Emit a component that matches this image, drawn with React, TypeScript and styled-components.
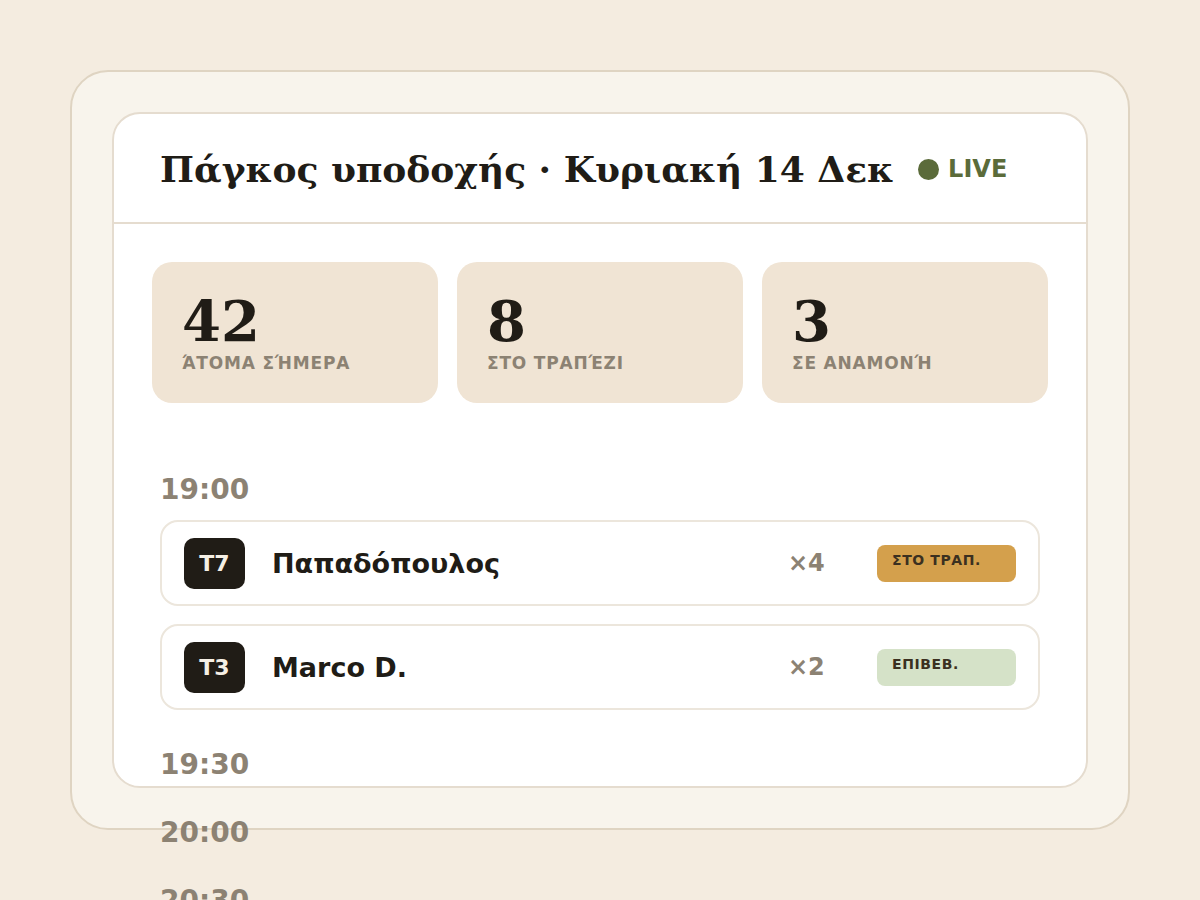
import React from "react";
import styled, { createGlobalStyle } from "styled-components";

const GlobalStyle = createGlobalStyle`
  html, body {
    margin: 0;
    padding: 0;
    background: #f4ece0;
  }
  body {
    font-family: "DejaVu Sans", "Noto Sans", sans-serif;
    color: #201c16;
  }
`;

const Page = styled.div`
  padding: 70px;
`;

const Frame = styled.div`
  height: 760px;
  box-sizing: border-box;
  padding: 40px;
  background: #f8f4ec;
  border: 2px solid #dfd4c2;
  border-radius: 38px;
`;

const Card = styled.div`
  height: 676px;
  box-sizing: border-box;
  background: #ffffff;
  border: 2px solid #e5dccf;
  border-radius: 28px;
`;

const Header = styled.header`
  height: 110px;
  box-sizing: border-box;
  padding: 2px 46px 0;
  display: flex;
  align-items: center;
  gap: 24px;
  border-bottom: 2px solid #e5dccf;
`;

const Title = styled.h1`
  margin: 0;
  font-family: "DejaVu Serif", "Liberation Serif", serif;
  font-size: 36px;
  font-weight: 700;
  color: #201c16;
`;

const Live = styled.div`
  display: flex;
  align-items: center;
  gap: 9px;
  color: #5b6b3a;
  font-size: 24px;
  font-weight: 700;
`;

const Dot = styled.span`
  width: 21px;
  height: 21px;
  border-radius: 50%;
  background: #5b6b3a;
`;

const Stats = styled.div`
  padding: 38px 38px 0;
  display: grid;
  grid-template-columns: repeat(3, 1fr);
  gap: 19px;
`;

const StatCard = styled.div`
  height: 141px;
  box-sizing: border-box;
  padding: 31px 30px 0;
  background: #f0e4d4;
  border-radius: 20px;
`;

const StatValue = styled.div`
  font-family: "DejaVu Serif", "Liberation Serif", serif;
  font-size: 56px;
  font-weight: 700;
  line-height: 1;
  color: #201c16;
`;

const StatLabel = styled.div`
  margin-top: 4px;
  font-size: 17px;
  font-weight: 700;
  letter-spacing: 0.8px;
  text-transform: uppercase;
  color: #8c8273;
`;

const Schedule = styled.div`
  padding: 70px 46px 0;
  display: flex;
  flex-direction: column;
  gap: 38px;
`;

const Slot = styled.section`
  display: flex;
  flex-direction: column;
  gap: 17px;
`;

const SlotTime = styled.div`
  height: 30px;
  font-size: 28px;
  font-weight: 700;
  line-height: 33px;
  color: #8c8273;
`;

const Rows = styled.div`
  display: flex;
  flex-direction: column;
  gap: 18px;
`;

const Row = styled.div`
  height: 86px;
  box-sizing: border-box;
  padding: 0 22px;
  display: grid;
  grid-template-columns: 61px 1fr 89px 139px;
  align-items: center;
  border: 2px solid #ece6dc;
  border-radius: 18px;
`;

const TableTag = styled.div`
  height: 51px;
  border-radius: 10px;
  background: #201c16;
  color: #f5efe5;
  font-size: 22px;
  font-weight: 700;
  display: flex;
  align-items: center;
  justify-content: center;
`;

const Guest = styled.div`
  margin-left: 27px;
  font-size: 27px;
  font-weight: 700;
  color: #201c16;
`;

const Party = styled.div`
  font-size: 24px;
  font-weight: 700;
  color: #8c8273;
`;

const Status = styled.div<{ $tone: "seated" | "confirmed" }>`
  height: 37px;
  box-sizing: border-box;
  padding: 7px 15px 0;
  border-radius: 8px;
  background: ${(p) => (p.$tone === "seated" ? "#d4a04c" : "#d5e2c8")};
  color: #3b3020;
  font-size: 14px;
  font-weight: 700;
  letter-spacing: 0.6px;
`;

type Booking = {
  table: string;
  name: string;
  guests: number;
  status: string;
  tone: "seated" | "confirmed";
};

const stats = [
  { value: "42", label: "Άτομα σήμερα" },
  { value: "8", label: "Στο τραπέζι" },
  { value: "3", label: "Σε αναμονή" },
];

const slots: { time: string; bookings: Booking[] }[] = [
  {
    time: "19:00",
    bookings: [
      { table: "T7", name: "Παπαδόπουλος", guests: 4, status: "ΣΤΟ ΤΡΑΠ.", tone: "seated" },
      { table: "T3", name: "Marco D.", guests: 2, status: "ΕΠΙΒΕΒ.", tone: "confirmed" },
    ],
  },
  { time: "19:30", bookings: [] },
  { time: "20:00", bookings: [] },
  { time: "20:30", bookings: [] },
];

const App = () => {
  return (
    <Page>
      <GlobalStyle />
      <Frame>
        <Card>
          <Header>
            <Title>Πάγκος υποδοχής · Κυριακή 14 Δεκ</Title>
            <Live>
              <Dot />
              LIVE
            </Live>
          </Header>

          <Stats>
            {stats.map((s) => (
              <StatCard key={s.label}>
                <StatValue>{s.value}</StatValue>
                <StatLabel>{s.label}</StatLabel>
              </StatCard>
            ))}
          </Stats>

          <Schedule>
            {slots.map((slot) => (
              <Slot key={slot.time}>
                <SlotTime>{slot.time}</SlotTime>
                {slot.bookings.length > 0 && (
                  <Rows>
                    {slot.bookings.map((b) => (
                      <Row key={b.table}>
                        <TableTag>{b.table}</TableTag>
                        <Guest>{b.name}</Guest>
                        <Party>×{b.guests}</Party>
                        <Status $tone={b.tone}>{b.status}</Status>
                      </Row>
                    ))}
                  </Rows>
                )}
              </Slot>
            ))}
          </Schedule>
        </Card>
      </Frame>
    </Page>
  );
};

export default App;
